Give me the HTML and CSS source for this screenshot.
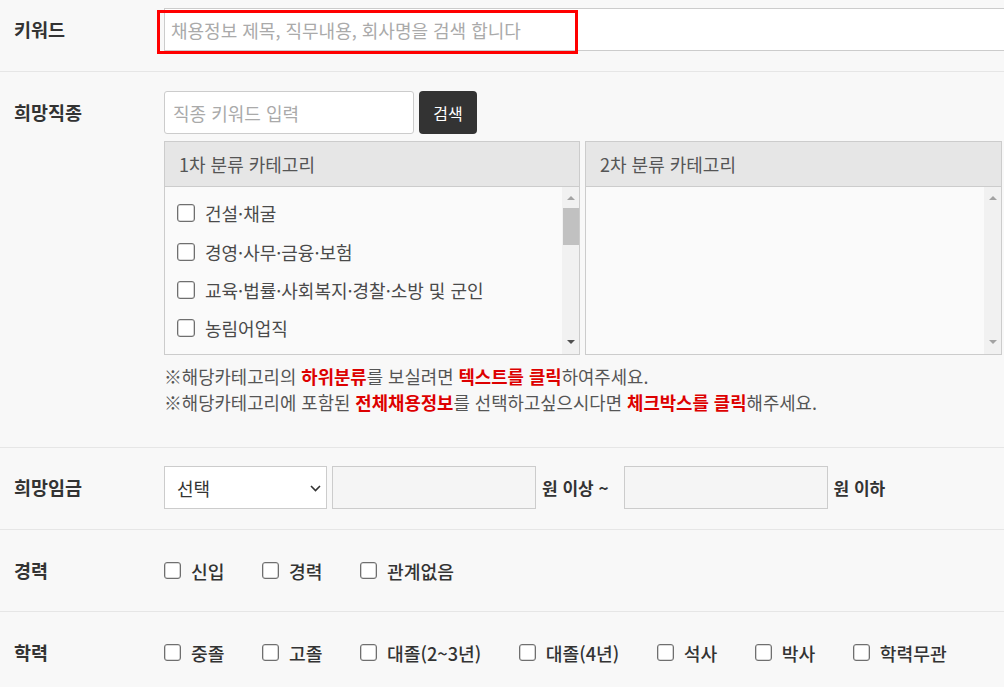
FILE: index.html
```html
<!DOCTYPE html>
<html lang="ko">
<head>
<meta charset="utf-8">
<title>채용정보 검색</title>
<link rel="stylesheet" href="styles.css">
</head>
<body>
<form class="search-form">
  <div class="row row-keyword">
    <div class="label">키워드</div>
    <div class="field">
      <div class="kw-wrap">
        <input class="kw-input" type="text" placeholder="채용정보 제목, 직무내용, 회사명을 검색 합니다">
        <span class="highlight"></span>
      </div>
    </div>
  </div>

  <div class="row row-job">
    <div class="label">희망직종</div>
    <div class="field">
      <div class="job-search">
        <input class="job-input" type="text" placeholder="직종 키워드 입력">
        <button class="btn-search" type="button">검색</button>
      </div>
      <div class="cat-grid">
        <div class="cat-box">
          <div class="cat-head">1차 분류 카테고리</div>
          <div class="cat-body">
            <ul class="cat-list">
              <li><input type="checkbox" class="cb cb-lg"><span>건설·채굴</span></li>
              <li><input type="checkbox" class="cb cb-lg"><span>경영·사무·금융·보험</span></li>
              <li><input type="checkbox" class="cb cb-lg"><span>교육·법률·사회복지·경찰·소방 및 군인</span></li>
              <li><input type="checkbox" class="cb cb-lg"><span>농림어업직</span></li>
              <li><input type="checkbox" class="cb cb-lg"><span>미용·여행·숙박·음식·경비·청소</span></li>
              <li><input type="checkbox" class="cb cb-lg"><span>보건·의료</span></li>
            </ul>
            <div class="sbar">
              <span class="arr"><i class="tri tri-up"></i></span>
              <span class="thumb"></span>
              <span class="track"></span>
              <span class="arr arr-down"><i class="tri tri-down dark"></i></span>
            </div>
          </div>
        </div>
        <div class="cat-box">
          <div class="cat-head">2차 분류 카테고리</div>
          <div class="cat-body">
            <ul class="cat-list"></ul>
            <div class="sbar">
              <span class="arr"><i class="tri tri-up"></i></span>
              <span class="track"></span>
              <span class="arr arr-down"><i class="tri tri-down"></i></span>
            </div>
          </div>
        </div>
      </div>
      <div class="notes">
        <p>※해당카테고리의 <b>하위분류</b>를 보실려면 <b>텍스트를 클릭</b>하여주세요.</p>
        <p>※해당카테고리에 포함된 <b>전체채용정보</b>를 선택하고싶으시다면 <b>체크박스를 클릭</b>해주세요.</p>
      </div>
    </div>
  </div>

  <div class="row row-pay">
    <div class="label">희망임금</div>
    <div class="field pay">
      <div class="select-wrap">
        <select class="pay-select">
          <option>선택</option>
          <option>연봉</option>
          <option>월급</option>
        </select>
        <svg class="chev" width="11" height="7" viewBox="0 0 11 7"><path d="M1 1 L5.5 5.5 L10 1" fill="none" stroke="#333" stroke-width="1.6"/></svg>
      </div>
      <input class="pay-input" type="text">
      <span class="unit unit-min">원 이상 ~</span>
      <input class="pay-input" type="text">
      <span class="unit unit-max">원 이하</span>
    </div>
  </div>

  <div class="row row-check">
    <div class="label">경력</div>
    <div class="field checks">
      <label class="chk"><input type="checkbox" class="cb"><span>신입</span></label>
      <label class="chk"><input type="checkbox" class="cb"><span>경력</span></label>
      <label class="chk"><input type="checkbox" class="cb"><span>관계없음</span></label>
    </div>
  </div>

  <div class="row row-check row-last">
    <div class="label">학력</div>
    <div class="field checks">
      <label class="chk"><input type="checkbox" class="cb"><span>중졸</span></label>
      <label class="chk"><input type="checkbox" class="cb"><span>고졸</span></label>
      <label class="chk"><input type="checkbox" class="cb"><span>대졸(2~3년)</span></label>
      <label class="chk"><input type="checkbox" class="cb"><span>대졸(4년)</span></label>
      <label class="chk"><input type="checkbox" class="cb"><span>석사</span></label>
      <label class="chk"><input type="checkbox" class="cb"><span>박사</span></label>
      <label class="chk"><input type="checkbox" class="cb"><span>학력무관</span></label>
    </div>
  </div>
</form>
</body>
</html>
```

FILE: styles.css
```css
* { box-sizing: border-box; }
html, body {
  margin: 0;
  padding: 0;
  background: #f8f8f8;
  overflow: hidden;
}
body {
  font-family: "Noto Sans CJK KR", "Noto Sans", sans-serif;
  font-size: 18px;
  color: #333;
}
input, select, button {
  font-family: "Noto Sans CJK KR", "Noto Sans", sans-serif;
  font-size: 18px;
}
.search-form { width: 1004px; }

.row {
  display: grid;
  grid-template-columns: 164px 1fr;
  border-bottom: 1px solid #e6e6e6;
  overflow: hidden;
}
.label {
  padding-left: 14px;
  line-height: 43px;
  height: 43px;
  font-weight: 700;
  color: #333;
  font-size: 18.5px;
}

/* keyword row */
.row-keyword { padding: 8px 0 20px; }
.kw-wrap { position: relative; width: 860px; height: 43px; }
.kw-input {
  width: 100%;
  height: 43px;
  border: 1px solid #cccccc;
  background: #fff;
  padding: 0 6px;
  color: #333;
  outline: none;
}
.kw-input::placeholder, .job-input::placeholder { color: #aaaaaa; }
.highlight {
  position: absolute;
  left: -7px;
  top: 2px;
  width: 421px;
  height: 44px;
  border: 3px solid #ff0000;
  pointer-events: none;
}

/* job row */
.row-job { padding: 19px 0 32px; }
.job-search { display: flex; gap: 5px; height: 43px; }
.job-input {
  width: 250px;
  height: 43px;
  border: 1px solid #cccccc;
  border-radius: 3px;
  background: #fff;
  padding: 0 8px;
  outline: none;
}
.btn-search {
  width: 58px;
  height: 43px;
  border: 0;
  border-radius: 4px;
  background: #333333;
  color: #fff;
  font-size: 16px;
  padding: 0;
}
.cat-grid {
  margin-top: 7px;
  display: grid;
  grid-template-columns: 416px 417px;
  gap: 5px;
}
.cat-box {
  border: 1px solid #cccccc;
  height: 214px;
  display: flex;
  flex-direction: column;
}
.cat-head {
  height: 45px;
  background: #e6e6e6;
  border-bottom: 1px solid #cccccc;
  padding-left: 14px;
  line-height: 44px;
  color: #555;
  font-size: 18px;
}
.cat-body {
  flex: 1;
  display: flex;
  background: #fafafa;
  overflow: hidden;
}
.cat-list {
  flex: 1;
  list-style: none;
  margin: 0;
  padding: 7px 0 0 12px;
  overflow: hidden;
}
.cat-list li {
  display: flex;
  align-items: center;
  height: 38.4px;
  color: #4a4a4a;
  font-size: 18px;
  white-space: nowrap;
}
.sbar {
  width: 17px;
  background: #f1f1f1;
  display: flex;
  flex-direction: column;
  align-items: center;
}
.arr {
  height: 21px;
  width: 17px;
  display: flex;
  align-items: center;
  justify-content: center;
}
.arr-down { height: 24px; }
.thumb {
  width: 16px;
  height: 37px;
  background: #c1c1c1;
}
.track { flex: 1; }
.tri {
  width: 0;
  height: 0;
  border-left: 4px solid transparent;
  border-right: 4px solid transparent;
}
.tri-up { border-bottom: 4px solid #a3a3a3; }
.tri-down { border-top: 4px solid #a3a3a3; }
.tri-down.dark { border-top-color: #505050; }

/* checkbox */
.cb {
  appearance: none;
  -webkit-appearance: none;
  margin: 0 10px 0 0;
  width: 17px;
  height: 17px;
  border: 1px solid #6f6f6f;
  box-shadow: inset 0 0 0 0.6px rgba(110, 110, 110, 0.5);
  border-radius: 3px;
  background: #fff;
  flex: none;
}
.cb-lg { width: 18px; height: 18px; }

.notes {
  margin-top: 8px;
  font-size: 17.8px;
  line-height: 26px;
  color: #555;
}
.notes p { margin: 0; white-space: nowrap; }
.notes b { color: #dd0000; font-weight: 700; }

/* pay row */
.row-pay { padding: 18px 0 20px; }
.pay { display: flex; align-items: center; height: 43px; }
.select-wrap { position: relative; width: 163px; height: 43px; }
.pay-select {
  appearance: none;
  -webkit-appearance: none;
  width: 100%;
  height: 43px;
  border: 1px solid #cccccc;
  border-radius: 0;
  background: #fff;
  padding: 0 12px;
  color: #333;
  outline: none;
}
.chev {
  position: absolute;
  right: 6px;
  top: 19px;
  pointer-events: none;
}
.pay-input {
  margin-left: 5px;
  width: 204px;
  height: 43px;
  border: 1px solid #cccccc;
  background: #f5f5f5;
  outline: none;
}
.unit { font-weight: 700; color: #333; font-size: 17px; white-space: nowrap; }
.unit-min { margin: 0 10px 0 6px; }
.unit-max { margin-left: 6px; }

/* checkbox rows */
.row-check { padding: 19px 0 19px; }
.row-last { border-bottom: 0; }
.checks { display: flex; align-items: center; height: 43px; }
.chk {
  display: flex;
  align-items: center;
  margin-right: 37.5px;
  font-weight: 500;
  color: #333;
  font-size: 18.2px;
  white-space: nowrap;
}
```
